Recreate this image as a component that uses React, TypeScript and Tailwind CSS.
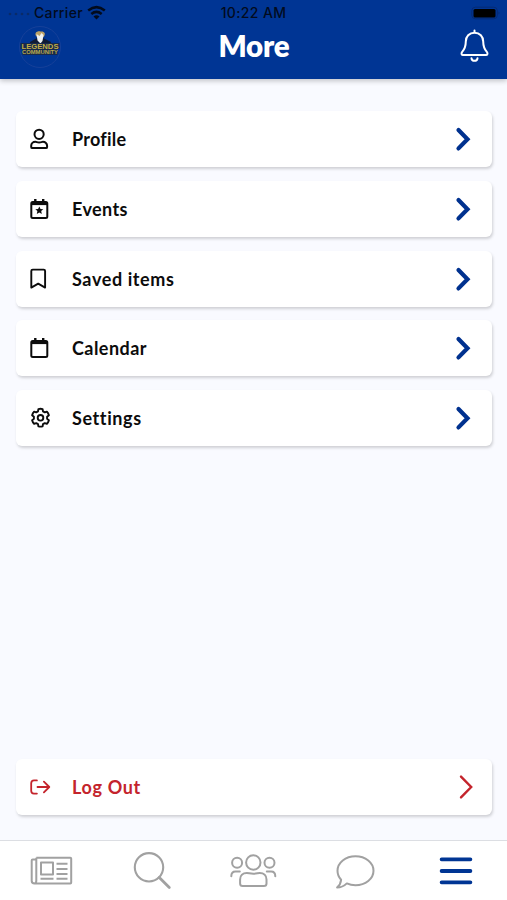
import type { ReactNode } from "react";

type RowProps = {
  icon: ReactNode;
  text: string;
  spacing: string;
  danger?: boolean;
};

const ProfileIcon = () => (
  <svg width="22" height="22" viewBox="0 0 22 22" fill="none" stroke="currentColor" strokeWidth="2" strokeLinejoin="round">
    <circle cx="9.1" cy="6.3" r="4.6" />
    <path d="M5.4 13.8C3 13.8 1.200 15.600 1.200 17.800v1.100q0 1.200 1.200 1.200h13.500q1.200 0 1.200-1.200v-1.100c0-2.200-1.800-4-4.200-4-1.200 0-1.800.7-3.800.7s-2.500-.7-3.700-.7z" />
  </svg>
);

const CalendarIcon = ({ star = false }: { star?: boolean }) => (
  <svg width="22" height="22" viewBox="0 0 22 22" fill="none" stroke="currentColor" strokeWidth="2" strokeLinejoin="round">
    <rect x="1.3" y="3.900" width="16" height="16" rx="1.5" />
    <path d="M1.2 5.500h16.200" strokeWidth="3.200" />
    <path d="M5.3 1v3M13.200 1v3" strokeWidth="2.400" />
    {star && <path d="M9.300 8.400l1.200 2.500 2.800.3-2.100 1.900.6 2.800-2.500-1.400-2.500 1.400.6-2.800-2.100-1.900 2.800-.3z" fill="currentColor" stroke="none" />}
  </svg>
);

const BookmarkIcon = () => (
  <svg width="22" height="22" viewBox="0 0 22 22" fill="none" stroke="currentColor" strokeWidth="1.900" strokeLinejoin="round">
    <path d="M1.300 19.600V3q0-1.400 1.400-1.400h11q1.400 0 1.400 1.400v16.600l-6.900-4z" />
  </svg>
);

const GearIcon = () => (
  <svg width="22" height="22" viewBox="0 0 22 22" fill="none" stroke="currentColor" strokeWidth="1.900" strokeLinejoin="round">
    <path d="M8.400 2.100q2.100-.6 4.200 0l.4 2.300 1.800 1 2.100-.8q1.400 1.500 2 3.600l-1.800 1.500v2.100l1.800 1.500q-.6 2.100-2 3.600l-2.100-.8-1.800 1-.4 2.300q-2.100.5-4.200 0L8 17.100l-1.800-1-2.100.8q-1.400-1.500-2-3.600l1.800-1.500V9.700L2.100 8.200q.6-2.100 2-3.600l2.100.8 1.800-1z" />
    <circle cx="10.500" cy="10.800" r="2.800" />
  </svg>
);

const LogoutIcon = () => (
  <svg width="22" height="22" viewBox="0 0 22 22" fill="none" stroke="currentColor" strokeWidth="1.800" strokeLinecap="round" strokeLinejoin="round">
    <path d="M6.900 4.400H4Q1.200 4.400 1.200 7.200v7.600q0 2.800 2.800 2.800h2.900M7.500 11h11.600M13.900 5.600l5.400 5.400-5.400 5.400" />
  </svg>
);

const Row = ({ icon, text, spacing, danger }: RowProps) => (
  <div
    className={`flex h-14 shrink-0 items-center rounded-md bg-white pl-3.5 pr-4 shadow-[1px_2px_3px_rgba(0,0,0,0.17)] ${
      danger ? "text-[#c4242c]" : "text-[#0c0c0c]"
    }`}
  >
    <div className="w-[42px]">{icon}</div>
    <span className={`text-[18px] leading-6 font-bold whitespace-nowrap ${spacing}`}>{text}</span>
    {danger ? (
      <svg className="ml-auto" width="22" height="26" viewBox="0 0 22 26" fill="none" stroke="currentColor" strokeWidth="2.4" strokeLinecap="round">
        <path d="M7 2.600L17.200 13 7 23.400" />
      </svg>
    ) : (
      <svg className="ml-auto text-[#00318f]" width="22" height="26" viewBox="0 0 22 26" fill="none" stroke="currentColor" strokeWidth="4.200" strokeLinecap="round">
        <path d="M4.500 4L13.500 13.200 4.500 22.400" />
      </svg>
    )}
  </div>
);

const Logo = () => (
  <svg width="46" height="44" viewBox="0 0 46 44" fontFamily="Liberation Sans, sans-serif" fontWeight="700">
    <circle cx="23" cy="22" r="20.5" fill="none" stroke="#164099" strokeWidth="1" />
    <path d="M13 17l7-4h6l8 4v3H13z" fill="#101b35" />
    <path d="M19.500 11.500c-3-3.500 1-6 4-5 4-.5 5.500 2 3.500 5l-2 1.500z" fill="#bba267" />
    <path d="M19.500 9l3 2 2-3 2 2-1 6-2 2.500-3-3z" fill="#eef1f2" />
    <path d="M3.500 18h39v6h-2v6h-35v-6h-2z" fill="#17294c" />
    <text x="4.500" y="24.300" fontSize="7" textLength="37" lengthAdjust="spacingAndGlyphs" fill="#c3ae45">LEGENDS</text>
    <text x="5" y="29.400" fontSize="6" textLength="36" lengthAdjust="spacingAndGlyphs" fill="#b8aa50">COMMUNITY</text>
  </svg>
);

const Header = () => (
  <header className="z-10 flex h-[79px] shrink-0 flex-col bg-[#003594] shadow-[0_2px_5px_rgba(0,0,0,0.22)]">
    {/* status bar */}
    <div className="grid h-[25px] grid-cols-3 items-center font-['Inter','Liberation_Sans',sans-serif] text-[14px] leading-4 font-medium text-[#020b1d]">
      <div className="flex items-center pl-2">
        <svg width="26" height="8" viewBox="0 0 26 8" fill="#092b68">
          <circle cx="2" cy="5" r="1.3" />
          <circle cx="8" cy="5" r="1.3" />
          <circle cx="14" cy="5" r="1.3" />
          <circle cx="20" cy="5" r="1.3" />
        </svg>
        <span className="tracking-[0.35px]">Carrier</span>
        <svg className="ml-1" width="19" height="15" viewBox="0 0 19 15" fill="none" stroke="currentColor" strokeWidth="2.500">
          <path d="M1.200 5.500q8.300-6.800 16.600 0M4.300 9q5.200-4.200 10.400 0" />
          <path d="M9.500 14.500l-3-3q3-2.300 6 0z" fill="currentColor" stroke="none" />
        </svg>
      </div>
      <span className="text-center tracking-[0.35px]">10:22 AM</span>
      <svg className="ml-auto mr-1.5" width="30" height="14" viewBox="0 0 30 14">
        <rect x=".8" y="1.200" width="25.500" height="11.600" rx="3.500" fill="none" stroke="#052a73" />
        <rect x="2.500" y="3" width="22" height="8.500" rx="1.500" fill="#000" />
        <path d="M27.500 5.500q2 1.500 0 3z" fill="#052a73" />
      </svg>
    </div>
    <div className="grid h-[44px] grid-cols-3 items-center pl-[17px] pr-4">
      <Logo />
      <h1 className="pb-[3px] text-center text-[29.5px] leading-9 font-extrabold tracking-[-0.2px] text-white">More</h1>
      <svg className="mb-0.5 ml-auto" width="32" height="36" viewBox="0 0 32 36" fill="none" stroke="#fff" strokeWidth="2" strokeLinecap="round" strokeLinejoin="round">
        <path d="M15.500 2.500v2.200M15.500 4.700C10.200 4.700 6.800 8.600 6.800 13.500c0 6.500-1.800 8.500-3.800 10.700-1 1.200-.4 2.800 1 2.800h23c1.400 0 2-1.600 1-2.800-2-2.200-3.800-4.200-3.800-10.700 0-4.900-3.400-8.800-8.700-8.800z" />
        <path d="M12.500 30.300c.4 3.300 5.600 3.300 6 0" />
      </svg>
    </div>
  </header>
);

const TabBar = () => (
  <nav className="grid h-[60px] shrink-0 grid-cols-5 border-t border-[#dcdee3] bg-white text-[#a1a1a1]">
    <svg className="mx-auto mt-2.5" width="46" height="40" viewBox="0 0 46 40" fill="none" stroke="currentColor" strokeWidth="2" strokeLinejoin="round">
      <path d="M8.300 6.700h34q.9 0 .9.900v24q0 .9-.9.900H6.500q-2.800 0-2.800-2.800V9.500q0-1 1-1h3.500M8.300 6.700V29.500q0 3-2 3" />
      <rect x="13" y="11.500" width="12" height="12" />
      <path d="M28.500 12.800h11M28.500 18.100h11M28.500 23.100h11M12.500 27.800h13M28.500 27.800h11" />
    </svg>
    <svg className="mx-auto mt-2.5" width="40" height="40" viewBox="0 0 40 40" fill="none" stroke="currentColor" strokeWidth="2.100" strokeLinecap="round">
      <circle cx="17" cy="16.300" r="14.200" />
      <path d="M27.300 26.600l10 10" strokeWidth="2.800" />
    </svg>
    <svg className="mx-auto mt-2.5" width="48" height="40" viewBox="0 0 48 40" fill="none" stroke="currentColor" strokeWidth="2" strokeLinecap="round" strokeLinejoin="round">
      <circle cx="24.300" cy="11.500" r="7.200" />
      <circle cx="8.100" cy="11.700" r="5" />
      <circle cx="40.500" cy="11.700" r="5" />
      <path d="M17.800 22c-4 0-6.700 2.700-6.700 6.500v4q0 2.600 2.600 2.600h21.200q2.600 0 2.600-2.600v-4c0-3.800-2.700-6.500-6.700-6.500-2 0-3.200.8-6.500.8s-4.500-.8-6.500-.8zM2.300 25.200c0-3 1.800-4.700 4.200-4.700h4.300M46.300 25.200c0-3-1.800-4.700-4.200-4.700h-4.300" />
    </svg>
    <svg className="mx-auto mt-2.5" width="42" height="40" viewBox="0 0 42 40" fill="none" stroke="currentColor" strokeWidth="2" strokeLinejoin="round">
      <path d="M21.500 5.300c10 0 18 6.400 18 14.500s-8 14.500-18 14.500c-3.400 0-6.200-.7-8.700-1.900-2.600 2.500-6 4.200-9.700 4.200 2-1.800 3.700-4.600 4-7.800-2.200-2.400-3.600-5.500-3.600-9 0-8.100 8-14.500 18-14.500z" />
    </svg>
    <svg className="mx-auto mt-2.5 text-[#003594]" width="36" height="40" viewBox="0 0 36 40" stroke="currentColor" strokeWidth="3.800" strokeLinecap="round">
      <path d="M3.600 8.300h28.800M3.600 20h28.800M3.600 31.300h28.800" />
    </svg>
  </nav>
);

function App() {
  return (
    <div className="flex h-[900px] w-full flex-col bg-[#f9faff] font-['Lato','Open_Sans',sans-serif]">
      <Header />
      <main className="flex flex-1 flex-col gap-[13.7px] pt-[32.4px] pr-[15px] pb-[25px] pl-4">
        <Row icon={<ProfileIcon />} text="Profile" spacing="tracking-[0.25px]" />
        <Row icon={<CalendarIcon star />} text="Events" spacing="tracking-[0.4px]" />
        <Row icon={<BookmarkIcon />} text="Saved items" spacing="tracking-[0.6px]" />
        <Row icon={<CalendarIcon />} text="Calendar" spacing="tracking-[0.45px]" />
        <Row icon={<GearIcon />} text="Settings" spacing="tracking-[0.6px]" />
        <div className="mt-auto">
          <Row icon={<LogoutIcon />} text="Log Out" spacing="tracking-[0.65px]" danger />
        </div>
      </main>
      <TabBar />
    </div>
  );
}

export default App;
